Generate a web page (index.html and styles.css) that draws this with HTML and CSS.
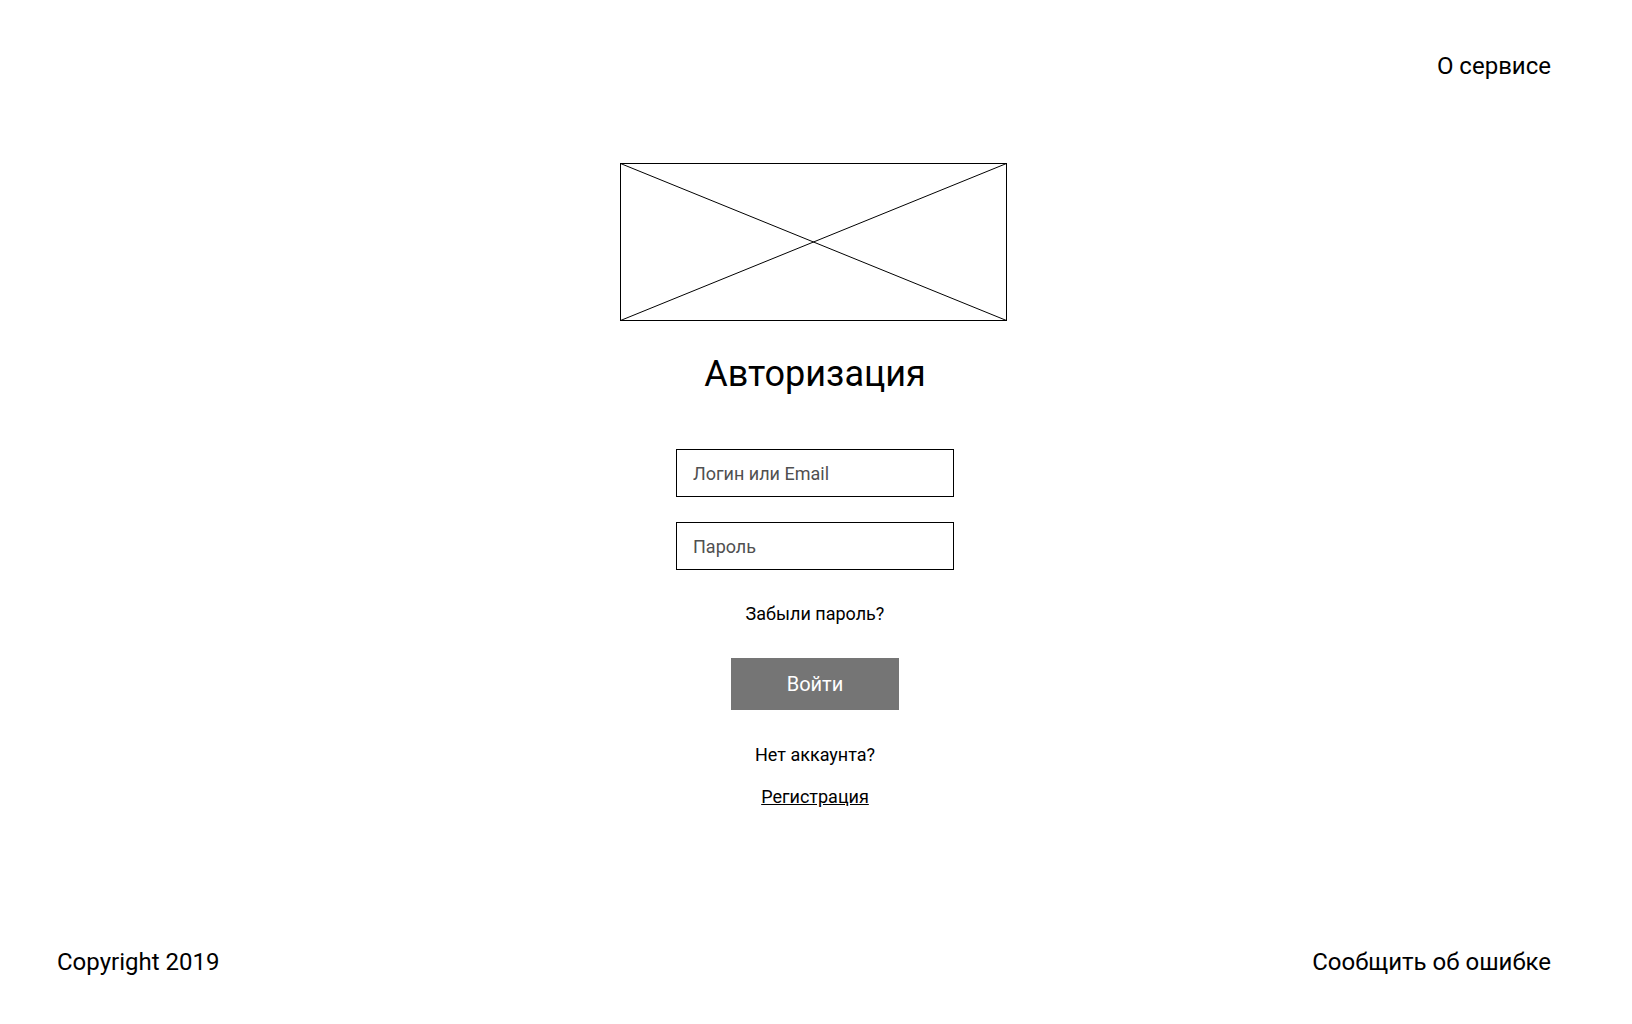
FILE: index.html
```html
<!DOCTYPE html>
<html lang="ru">
<head>
<meta charset="utf-8">
<title>Авторизация</title>
<link rel="stylesheet" href="styles.css">
</head>
<body>
<div class="page">
  <header class="header">
    <a class="header-link" href="#">О сервисе</a>
  </header>
  <main class="main">
    <div class="logo">
      <svg width="387" height="158" viewBox="0 0 387 158" xmlns="http://www.w3.org/2000/svg">
        <rect x="0.5" y="0.5" width="386" height="157" fill="#fff" stroke="#000" stroke-width="1"/>
        <line x1="0.5" y1="0.5" x2="386.5" y2="157.5" stroke="#000" stroke-width="1"/>
        <line x1="386.5" y1="0.5" x2="0.5" y2="157.5" stroke="#000" stroke-width="1"/>
      </svg>
    </div>
    <h1 class="title">Авторизация</h1>
    <form class="form">
      <input class="field" type="text" placeholder="Логин или Email">
      <input class="field" type="password" placeholder="Пароль">
      <a class="forgot" href="#">Забыли пароль?</a>
      <button class="btn" type="button">Войти</button>
      <div class="no-account">Нет аккаунта?</div>
      <a class="register" href="#">Регистрация</a>
    </form>
  </main>
  <footer class="footer">
    <span class="footer-text">Copyright 2019</span>
    <a class="footer-link" href="#">Сообщить об ошибке</a>
  </footer>
</div>
</body>
</html>
```

FILE: styles.css
```css
* { box-sizing: border-box; }
html, body { margin: 0; padding: 0; background: #fff; }
body { font-family: Roboto, "Liberation Sans", sans-serif; color: #000; }

.page {
  height: 100vh;
  display: flex;
  flex-direction: column;
}

.header {
  display: flex;
  justify-content: flex-end;
  padding: 52px 81px 0 0;
}
.header-link {
  font-size: 24px;
  line-height: 28px;
  color: #000;
  text-decoration: none;
}

.main {
  flex: 1;
  display: flex;
  flex-direction: column;
  align-items: center;
  padding-top: 83px;
  padding-right: 2px;
}
.logo { display: flex; margin-left: -4px; }
.logo svg { display: block; }

.title {
  margin: 32px 0 0;
  font-size: 36px;
  line-height: 42px;
  font-weight: 400;
}

.form {
  display: flex;
  flex-direction: column;
  align-items: center;
  margin-top: 54px;
}
.field {
  width: 278px;
  height: 48px;
  border: 1px solid #000;
  padding: 0 16px;
  font-family: Roboto, "Liberation Sans", sans-serif;
  font-size: 18px;
  color: #000;
  background: #fff;
  outline: none;
}
.field + .field { margin-top: 25px; }
.field::placeholder { color: #505050; }

.forgot {
  margin-top: 33px;
  font-size: 18px;
  line-height: 21px;
  color: #000;
  text-decoration: none;
}
.btn {
  margin-top: 34px;
  width: 168px;
  height: 52px;
  border: none;
  background: #757575;
  color: #fff;
  font-family: Roboto, "Liberation Sans", sans-serif;
  font-size: 20px;
  line-height: 52px;
  padding: 0;
}
.no-account {
  margin-top: 34px;
  font-size: 18px;
  line-height: 21px;
}
.register {
  margin-top: 21px;
  font-size: 18px;
  line-height: 21px;
  color: #000;
  text-decoration: underline;
}

.footer {
  display: flex;
  justify-content: space-between;
  padding: 0 81px 48px 57px;
}
.footer-text, .footer-link {
  font-size: 24px;
  line-height: 28px;
  color: #000;
  text-decoration: none;
}
```
